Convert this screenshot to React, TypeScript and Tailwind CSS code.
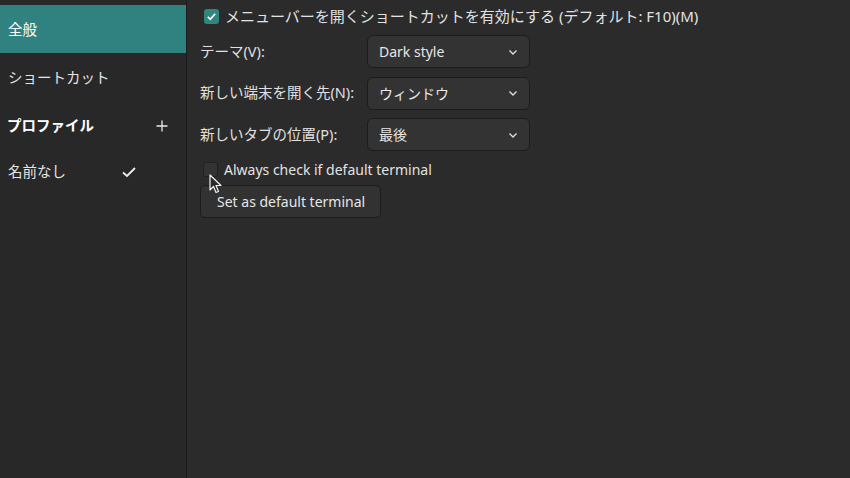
import React from "react";

const font = { fontFamily: '"Noto Sans", "Noto Sans CJK JP", sans-serif' };

const Chevron = () => (
  <svg width="12" height="12" viewBox="0 0 12 12" className="text-[#dcdcdc]">
    <path d="M2.5 4.5 L6 8 L9.5 4.5" fill="none" stroke="currentColor" strokeWidth="1.4" />
  </svg>
);

const Dropdown = ({ value }: { value: string }) => (
  <div className="w-[163px] h-[33px] flex items-center justify-between pl-[11px] pr-[10px] rounded-[6px] bg-[#333333] border border-[#1c1c1c] text-[14px] text-[#e6e6e6]">
    <span>{value}</span>
    <Chevron />
  </div>
);

const SettingRow = ({ label, value }: { label: string; value: string }) => (
  <div className="flex items-center">
    <span className="w-[167px] text-[14.5px] text-[#e0e0e0]">{label}</span>
    <Dropdown value={value} />
  </div>
);

const App = () => {
  return (
    <div className="w-[850px] h-[478px] flex bg-[#2b2b2b] overflow-hidden select-none" style={font}>
      {/* sidebar */}
      <div className="w-[187px] shrink-0 bg-[#282828] border-r border-[#1c1c1c] pt-[5px] text-[14.5px] text-[#e4e4e4]">
        <div className="h-[48px] flex items-center px-[8px] pt-[2px] bg-[#308280] text-white">全般</div>
        <div className="h-[48px] flex items-center px-[8px] pt-[2px]">ショートカット</div>
        <div className="h-[47px] flex items-center justify-between pl-[7px] pr-[17px] pt-[2px] font-bold text-white">
          <span>プロファイル</span>
          <svg width="14" height="14" viewBox="0 0 14 14">
            <path d="M7 1.5 V12.5 M1.5 7 H12.5" stroke="#e8e8e8" strokeWidth="1.3" />
          </svg>
        </div>
        <div className="h-[46px] flex items-center px-[8px] pt-[2px]">
          <span className="w-[113px]">名前なし</span>
          <svg width="16" height="14" viewBox="0 0 16 14">
            <path d="M2 7.5 L6 11 L14 3" fill="none" stroke="#ededed" strokeWidth="1.8" />
          </svg>
        </div>
      </div>

      {/* content */}
      <div className="relative flex-1 pl-[13px] pt-[6px] flex flex-col">
        <div className="flex items-center gap-[6px] pl-[4px] h-[20px] text-[15px] text-[#e2e2e2]">
          <span className="w-[15px] h-[15px] shrink-0 rounded-[3px] bg-[#2f8580] flex items-center justify-center">
            <svg width="11" height="11" viewBox="0 0 11 11">
              <path d="M1.8 5.8 L4.3 8.2 L9.2 2.8" fill="none" stroke="#ffffff" strokeWidth="1.7" />
            </svg>
          </span>
          <span>メニューバーを開くショートカットを有効にする (デフォルト: F10)(M)</span>
        </div>

        <div className="flex flex-col gap-[8.5px] mt-[9px]">
          <SettingRow label="テーマ(V):" value="Dark style" />
          <SettingRow label="新しい端末を開く先(N):" value="ウィンドウ" />
          <SettingRow label="新しいタブの位置(P):" value="最後" />
        </div>

        <div className="flex items-center gap-[6px] pl-[3px] mt-[8px] h-[20px] text-[14px] text-[#e2e2e2]">
          <span className="w-[15px] h-[15px] rounded-[3px] bg-[#333333] border border-[#202020]" />
          <span>Always check if default terminal</span>
        </div>

        <div className="mt-[6px] w-[181px] h-[33px] flex items-center pl-[16px] rounded-[5px] bg-[#323232] border border-[#1c1c1c] text-[14px] text-[#e6e6e6]">
          Set as default terminal
        </div>

        {/* mouse pointer */}
        <svg className="absolute left-[22px] top-[174px]" width="14" height="20" viewBox="0 0 14 20">
          <path d="M1 1 L1 16 L4.5 12.5 L7 18.5 L9.5 17.5 L7 11.5 L12 11.5 Z" fill="#2a2a2a" stroke="#f0f0f0" strokeWidth="1.2" strokeLinejoin="round" />
        </svg>
      </div>
    </div>
  );
};

export default App;
